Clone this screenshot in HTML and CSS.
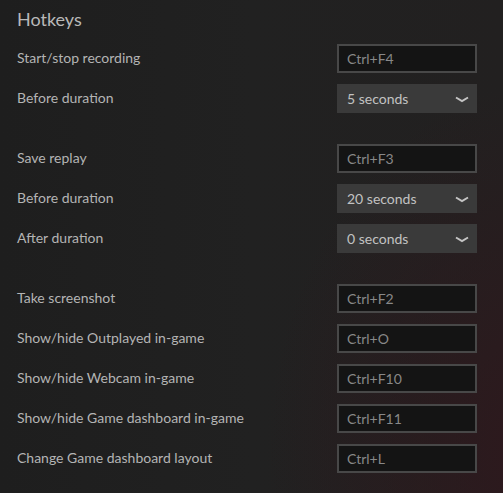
FILE: index.html
```html
<!DOCTYPE html>
<html>
<head>
<meta charset="utf-8">
<link rel="stylesheet" href="styles.css">
</head>
<body>
<div class="page">
  <h1 class="title">Hotkeys</h1>
  <div class="group">
    <div class="row"><span class="label">Start/stop recording</span><div class="key">Ctrl+F4</div></div>
    <div class="row"><span class="label">Before duration</span><div class="select"><span>5 seconds</span><svg class="chev" width="14" height="7" viewBox="0 0 14 7"><path d="M1 1.5 L7 5 L13 1.5" fill="none" stroke="#c4c4c4" stroke-width="2"/></svg></div></div>
  </div>
  <div class="group">
    <div class="row"><span class="label">Save replay</span><div class="key">Ctrl+F3</div></div>
    <div class="row"><span class="label">Before duration</span><div class="select"><span>20 seconds</span><svg class="chev" width="14" height="7" viewBox="0 0 14 7"><path d="M1 1.5 L7 5 L13 1.5" fill="none" stroke="#c4c4c4" stroke-width="2"/></svg></div></div>
    <div class="row"><span class="label">After duration</span><div class="select"><span>0 seconds</span><svg class="chev" width="14" height="7" viewBox="0 0 14 7"><path d="M1 1.5 L7 5 L13 1.5" fill="none" stroke="#c4c4c4" stroke-width="2"/></svg></div></div>
  </div>
  <div class="group">
    <div class="row"><span class="label">Take screenshot</span><div class="key">Ctrl+F2</div></div>
    <div class="row"><span class="label">Show/hide Outplayed in-game</span><div class="key">Ctrl+O</div></div>
    <div class="row"><span class="label">Show/hide Webcam in-game</span><div class="key">Ctrl+F10</div></div>
    <div class="row"><span class="label">Show/hide Game dashboard in-game</span><div class="key">Ctrl+F11</div></div>
    <div class="row"><span class="label">Change Game dashboard layout</span><div class="key">Ctrl+L</div></div>
  </div>
</div>
</body>
</html>
```

FILE: styles.css
```css
html, body {
  margin: 0;
  padding: 0;
  height: 100%;
}
body {
  font-family: Lato, "Open Sans", sans-serif;
  background:
    radial-gradient(ellipse 55% 75% at 108% 92%, rgba(50, 22, 28, 0.75) 0%, rgba(33, 33, 33, 0) 100%),
    linear-gradient(90deg, #1e1e1e 0%, #212121 50%, #222020 100%);
  color: #b4b4b4;
  overflow: hidden;
}
.page {
  padding: 9px 26px 0 17px;
}
.title {
  margin: 0 0 9px 0;
  font-size: 18px;
  font-weight: 400;
  line-height: 20px;
  color: #b9b9b9;
}
.group {
  margin-bottom: 20px;
}
.row {
  height: 40px;
  display: flex;
  align-items: center;
  justify-content: space-between;
}
.label {
  font-size: 14px;
  color: #b4b4b4;
  margin-top: -1px;
}
.key {
  box-sizing: border-box;
  width: 140px;
  height: 29px;
  border: 2px solid #484848;
  background: #141414;
  color: #888888;
  font-size: 14px;
  display: flex;
  align-items: center;
  padding-left: 8px;
}
.select {
  box-sizing: border-box;
  width: 140px;
  height: 29px;
  background: #3a3a3a;
  color: #c2c2c2;
  font-size: 14px;
  display: flex;
  align-items: center;
  justify-content: space-between;
  padding: 0 8px 0 10px;
}
.chev {
  display: block;
  margin-top: 3px;
}
```
